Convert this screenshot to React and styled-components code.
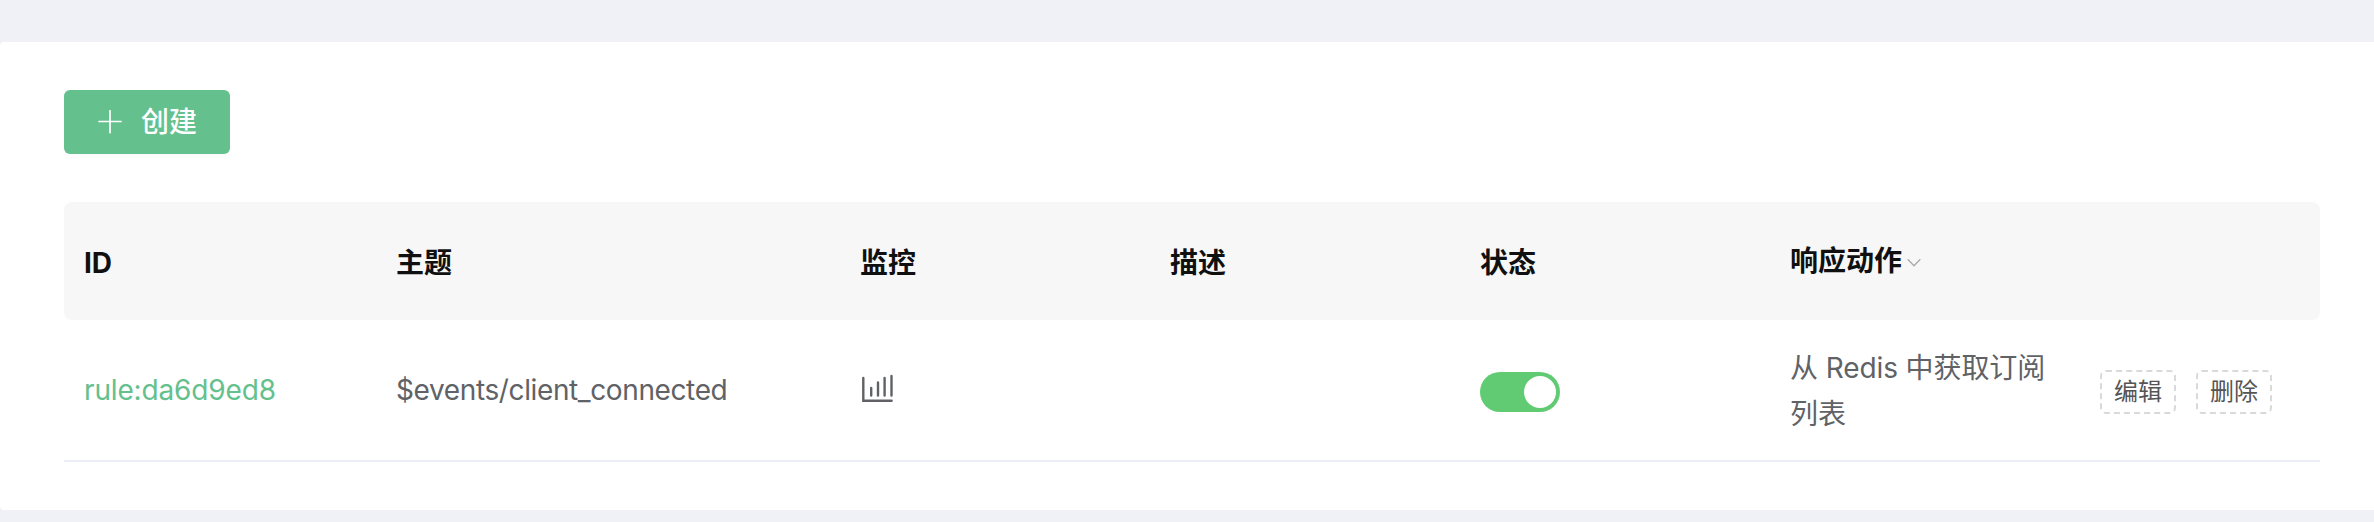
import React from "react";
import styled, { createGlobalStyle } from "styled-components";

const GlobalStyle = createGlobalStyle`
  * { box-sizing: border-box; }
  body {
    margin: 0;
    background: #f0f1f6;
    font-family: Inter, "Noto Sans CJK SC", sans-serif;
    font-size: 28px;
    color: #606266;
    overflow: hidden;
  }
`;

const Page = styled.main`
  height: 522px;
  padding: 42px 0 12px;
`;

const Card = styled.section`
  height: 468px;
  padding: 48px 54px 0 64px;
  background: #fff;
  border-radius: 4px 0 0 4px;
`;

const CreateButton = styled.button`
  display: flex;
  align-items: center;
  gap: 19px;
  width: 166px;
  height: 64px;
  padding: 0 0 0 34px;
  border: 0;
  border-radius: 6px;
  background: #64c08d;
  box-shadow: 0 4px 4px rgba(0, 0, 0, 0.016);
  color: #fff;
  font: inherit;
  font-weight: 500;
  white-space: nowrap;
`;

const ButtonLabel = styled.span`
  padding-top: 1px;
  line-height: 41px;
`;

const Table = styled.div`
  margin-top: 48px;
`;

const Row = styled.div`
  display: grid;
  grid-template-columns: 312px 464px 310px 310px 310px 310px 240px;
  align-items: center;
`;

const HeaderRow = styled(Row)`
  height: 118px;
  border-radius: 8px;
  background: #f7f7f7;
  color: #101010;
  font-weight: 600;
`;

const BodyRow = styled(Row)`
  height: 142px;
  border-bottom: 2px solid #ebeef5;
`;

const Cell = styled.div`
  display: flex;
  align-items: center;
  padding: 0 20px;
  line-height: 46px;
`;

const HeaderCell = styled(Cell)`
  padding-top: ${(p) => (p.$raised ? 0 : "3px")};
  font-weight: ${(p) => (p.$strong ? 700 : 600)};
`;

const Topic = styled.span`
  letter-spacing: -0.38px;
`;

const RuleLink = styled.a`
  color: #64c08d;
  letter-spacing: -0.15px;
`;

const ActionList = styled.div`
  width: 270px;
  padding-top: 2px;
  letter-spacing: -0.1px;
`;

const Switch = styled.div`
  display: flex;
  justify-content: flex-end;
  width: 80px;
  height: 40px;
  margin-top: 4px;
  padding: 4px;
  border-radius: 20px;
  background: #61cb73;
`;

const Knob = styled.span`
  width: 32px;
  height: 32px;
  border-radius: 50%;
  background: #fff;
`;

const Operations = styled(Cell)`
  gap: 20px;
  padding-top: 4px;
`;

const SmallButton = styled.button`
  display: flex;
  align-items: center;
  justify-content: center;
  flex: none;
  width: 76px;
  height: 44px;
  padding: 0;
  border: 2px dashed #d9d9d9;
  border-radius: 6px;
  background: #fff;
  color: #555;
  font: inherit;
  font-size: 24px;
  line-height: 36px;
`;

const ChartSvg = styled.svg`
  display: block;
  margin: -2px 0 0 1px;
`;

const ChevronSvg = styled.svg`
  margin: 4px 0 0 5px;
`;

const PlusIcon = () => (
  <svg width="24" height="24" viewBox="0 0 24 24" stroke="#fff" strokeWidth="1.7" strokeLinecap="round">
    <path d="M1 11.5H23M12 .7V22.7" />
  </svg>
);

const ChartIcon = () => (
  <ChartSvg width="32" height="30" viewBox="0 0 32 30" fill="none" stroke="#606266" strokeWidth="2.4" strokeLinecap="round">
    <path d="M2.3 4V26.7H30.6" strokeLinejoin="miter" />
    <path d="M10.2 14V21.6M17 8.5V21.6M23.6 4V21.6M30.5 2V21.6" />
  </ChartSvg>
);

const ChevronIcon = () => (
  <ChevronSvg width="14" height="10" viewBox="0 0 14 10" fill="none" stroke="#a6a8ab" strokeWidth="1.3">
    <path d="M.7 1.2L7 7.7L13.3 1.2" />
  </ChevronSvg>
);

export default function App() {
  return (
    <>
      <GlobalStyle />
      <Page>
        <Card>
          <CreateButton>
            <PlusIcon />
            <ButtonLabel>创建</ButtonLabel>
          </CreateButton>
          <Table>
            <HeaderRow>
              <HeaderCell $strong>ID</HeaderCell>
              <HeaderCell>主题</HeaderCell>
              <HeaderCell>监控</HeaderCell>
              <HeaderCell>描述</HeaderCell>
              <HeaderCell>状态</HeaderCell>
              <HeaderCell $raised>
                响应动作
                <ChevronIcon />
              </HeaderCell>
              <HeaderCell />
            </HeaderRow>
            <BodyRow>
              <Cell><RuleLink>rule:da6d9ed8</RuleLink></Cell>
              <Cell><Topic>$events/client_connected</Topic></Cell>
              <Cell><ChartIcon /></Cell>
              <Cell />
              <Cell><Switch><Knob /></Switch></Cell>
              <Cell>
                <ActionList>从 Redis 中获取订阅列表</ActionList>
              </Cell>
              <Operations>
                <SmallButton>编辑</SmallButton>
                <SmallButton>删除</SmallButton>
              </Operations>
            </BodyRow>
          </Table>
        </Card>
      </Page>
    </>
  );
}
